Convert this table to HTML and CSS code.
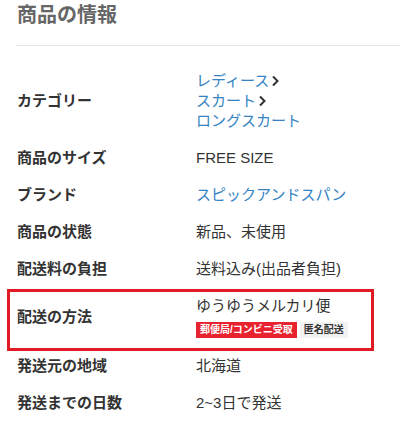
FILE: index.html
```html
<!DOCTYPE html>
<html lang="ja">
<head>
<meta charset="utf-8">
<link rel="stylesheet" href="styles.css">
</head>
<body>
<section class="info">
  <h2 class="info-title">商品の情報</h2>
  <div class="rows">
    <div class="row">
      <div class="label">カテゴリー</div>
      <div class="value">
        <a class="link">レディース<svg class="chev" width="9" height="12" viewBox="0 0 9 12"><path d="M2 1.5 L6.5 6 L2 10.5" fill="none" stroke="#333" stroke-width="2"/></svg></a>
        <a class="link">スカート<svg class="chev" width="9" height="12" viewBox="0 0 9 12"><path d="M2 1.5 L6.5 6 L2 10.5" fill="none" stroke="#333" stroke-width="2"/></svg></a>
        <a class="link">ロングスカート</a>
      </div>
    </div>
    <div class="row">
      <div class="label">商品のサイズ</div>
      <div class="value">FREE SIZE</div>
    </div>
    <div class="row">
      <div class="label">ブランド</div>
      <div class="value"><a class="link">スピックアンドスパン</a></div>
    </div>
    <div class="row">
      <div class="label">商品の状態</div>
      <div class="value">新品、未使用</div>
    </div>
    <div class="row">
      <div class="label">配送料の負担</div>
      <div class="value">送料込み(出品者負担)</div>
    </div>
    <div class="row row-ship">
      <div class="label">配送の方法</div>
      <div class="value">
        <div>ゆうゆうメルカリ便</div>
        <div class="badges">
          <span class="badge badge-red">郵便局/コンビニ受取</span>
          <span class="badge badge-gray">匿名配送</span>
        </div>
      </div>
    </div>
    <div class="row">
      <div class="label">発送元の地域</div>
      <div class="value">北海道</div>
    </div>
    <div class="row">
      <div class="label">発送までの日数</div>
      <div class="value">2~3日で発送</div>
    </div>
  </div>
</section>
</body>
</html>
```
FILE: styles.css
```css
html, body {
  margin: 0;
  padding: 0;
  background: #fff;
}
body {
  font-family: "Liberation Sans", "Noto Sans CJK JP", sans-serif;
  color: #333;
  width: 400px;
  overflow: hidden;
}
.info-title {
  margin: 0 0 0 16px;
  padding: 1px 0 16px 1px;
  font-size: 20px;
  line-height: 28px;
  font-weight: bold;
  color: #666;
  border-bottom: 1px solid #e6e6e6;
}
.rows {
  margin-top: 16px;
}
.row {
  display: flex;
  align-items: center;
  padding: 8.5px 0 8.5px 17px;
  font-size: 15px;
  line-height: 20px;
}
.label {
  width: 179px;
  flex: none;
  font-weight: bold;
  color: #333;
}
.value {
  display: flex;
  flex-direction: column;
  align-items: flex-start;
  color: #333;
}
.link {
  color: #3583c3;
  display: flex;
  align-items: center;
}
.chev {
  margin-left: 2px;
}
.row-ship {
  position: relative;
  padding-bottom: 10px;
}
.row-ship::after {
  content: "";
  position: absolute;
  top: 2px;
  bottom: -3px;
  left: 7px;
  right: 26px;
  border: 3px solid #e01b24;
  pointer-events: none;
}
.badges {
  display: flex;
  gap: 3px;
  margin-top: 6px;
}
.badge {
  font-size: 10px;
  line-height: 16px;
  font-weight: bold;
  padding: 0 4px;
}
.badge-red {
  background: #e8232f;
  color: #fff;
}
.badge-gray {
  background: #f2f2f2;
  color: #333;
}
```
